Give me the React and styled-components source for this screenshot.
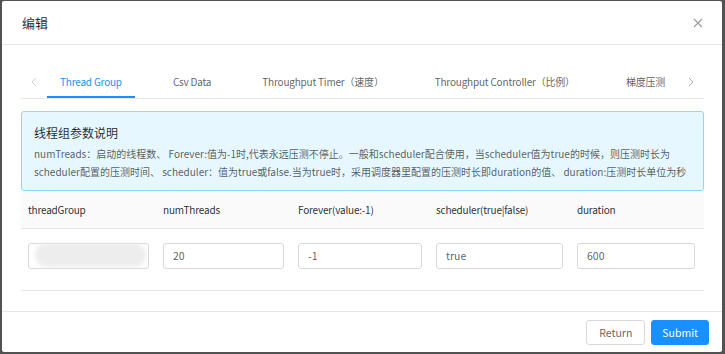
import React from "react";
import styled, { createGlobalStyle } from "styled-components";

const GlobalStyle = createGlobalStyle`
  html, body {
    margin: 0;
    padding: 0;
    background: #525252;
    overflow: hidden;
  }
  * {
    box-sizing: border-box;
  }
`;

const Mask = styled.div`
  width: 725px;
  height: 354px;
  padding: 1px 3px 2px 2px;
  display: flex;
  font-family: "Noto Sans CJK SC", "Open Sans", sans-serif;
  color: rgba(0, 0, 0, 0.65);
`;

const Modal = styled.div`
  flex: 1;
  min-width: 0;
  background: #fff;
  border-radius: 2px;
  display: flex;
  flex-direction: column;
`;

const Header = styled.div`
  height: 44px;
  border-bottom: 1px solid #e8e8e8;
  display: flex;
  align-items: center;
  justify-content: space-between;
  padding: 0 18px 0 20px;
`;

const Title = styled.div`
  font-size: 13px;
  color: rgba(0, 0, 0, 0.85);
`;

const Close = styled.button`
  border: none;
  background: none;
  padding: 0;
  width: 12px;
  height: 12px;
  display: flex;
  align-items: center;
  justify-content: center;
  cursor: pointer;
`;

const Body = styled.div`
  flex: 1;
  min-width: 0;
  padding: 20px 18px 0 19px;
`;

const TabBar = styled.div`
  height: 34px;
  display: flex;
  align-items: stretch;
  border-bottom: 1px solid #e8e8e8;
  margin-bottom: 12px;
`;

const Arrow = styled.div`
  width: 26px;
  display: flex;
  align-items: center;
  justify-content: center;
  flex: none;
`;

const TabList = styled.div`
  flex: 1;
  min-width: 0;
  display: flex;
  gap: 25px;
  overflow: hidden;
  white-space: nowrap;
`;

const Tab = styled.div`
  position: relative;
  padding: 0 13px;
  display: flex;
  align-items: center;
  font-size: 10px;
  letter-spacing: -0.2px;
  color: ${(p) => (p.$active ? "#1890ff" : "rgba(0,0,0,0.65)")};
  flex: none;
  &::after {
    content: "";
    position: absolute;
    left: 0;
    right: 0;
    bottom: 0;
    height: 2px;
    background: ${(p) => (p.$active ? "#1890ff" : "transparent")};
  }
`;

const Notice = styled.div`
  background: #e6f7ff;
  border: 1px solid #91d5ff;
  border-radius: 3px;
  padding: 11px 12px 9px;
`;

const NoticeTitle = styled.div`
  font-size: 12px;
  line-height: 20px;
  color: rgba(0, 0, 0, 0.85);
  margin-bottom: 2px;
`;

const NoticeText = styled.div`
  font-size: 10px;
  line-height: 18px;
  color: rgba(0, 0, 0, 0.65);
  white-space: nowrap;
`;

const Grid = styled.div`
  display: grid;
  grid-template-columns: 135px 135px 138px 141px 134px;
`;

const HeadCell = styled.div`
  background: #fafafa;
  border-bottom: 1px solid #e8e8e8;
  height: 38px;
  padding: 0 7px;
  display: flex;
  align-items: center;
  font-size: 10px;
  letter-spacing: -0.2px;
  color: rgba(0, 0, 0, 0.85);
  white-space: nowrap;
`;

const Cell = styled.div`
  border-bottom: 1px solid #e8e8e8;
  padding: 12px ${(p) => p.$right || 7}px 21px 7px;
`;

const InputWrap = styled.div`
  position: relative;
`;

const Input = styled.input`
  width: 100%;
  height: 26px;
  border: 1px solid #d9d9d9;
  border-radius: 3px;
  padding: 0 9px;
  font-family: inherit;
  font-size: 10.5px;
  color: rgba(0, 0, 0, 0.65);
  background: #fff;
  outline: none;
`;

const Blur = styled.div`
  position: absolute;
  left: 7px;
  right: 3px;
  top: 2px;
  height: 24px;
  border-radius: 12px;
  background: #ededed;
  filter: blur(2px);
  pointer-events: none;
`;

const Footer = styled.div`
  border-top: 1px solid #e8e8e8;
  height: 41px;
  padding: 0 13px;
  display: flex;
  align-items: center;
  justify-content: flex-end;
  gap: 6px;
`;

const Button = styled.button`
  height: 25px;
  padding: 0 ${(p) => (p.$primary ? 10 : 12)}px;
  border-radius: 3px;
  border: 1px solid ${(p) => (p.$primary ? "#1890ff" : "#d9d9d9")};
  background: ${(p) => (p.$primary ? "#1890ff" : "#fff")};
  color: ${(p) => (p.$primary ? "#fff" : "rgba(0,0,0,0.65)")};
  font-family: inherit;
  font-size: 10.5px;
  cursor: pointer;
`;

const Chevron = ({ dir, color }) => (
  <svg width="6" height="10" viewBox="0 0 6 10">
    <polyline
      points={dir === "left" ? "5,1 1,5 5,9" : "1,1 5,5 1,9"}
      fill="none"
      stroke={color}
      strokeWidth="1"
    />
  </svg>
);

const tabs = [
  "Thread Group",
  "Csv Data",
  "Throughput Timer（速度）",
  "Throughput Controller（比例）",
  "梯度压测",
];

const columns = [
  { name: "threadGroup", value: "", blur: true },
  { name: "numThreads", value: "20" },
  { name: "Forever(value:-1)", value: "-1" },
  { name: "scheduler(true|false)", value: "true" },
  { name: "duration", value: "600", right: 9 },
];

function App() {
  return (
    <>
      <GlobalStyle />
      <Mask>
        <Modal>
          <Header>
            <Title>编辑</Title>
            <Close>
              <svg width="10" height="10" viewBox="0 0 10 10">
                <path d="M1 1L9 9M9 1L1 9" stroke="#999" strokeWidth="1.1" />
              </svg>
            </Close>
          </Header>
          <Body>
            <TabBar>
              <Arrow>
                <Chevron dir="left" color="#d0d0d0" />
              </Arrow>
              <TabList>
                {tabs.map((t, i) => (
                  <Tab key={t} $active={i === 0}>
                    {t}
                  </Tab>
                ))}
              </TabList>
              <Arrow>
                <Chevron dir="right" color="#aaa" />
              </Arrow>
            </TabBar>
            <Notice>
              <NoticeTitle>线程组参数说明</NoticeTitle>
              <NoticeText>
                numTreads：启动的线程数、 Forever:值为-1时,代表永远压测不停止。一般和scheduler配合使用，当scheduler值为true的时候，则压测时长为
              </NoticeText>
              <NoticeText>
                scheduler配置的压测时间、 scheduler：值为true或false.当为true时，采用调度器里配置的压测时长即duration的值、 duration:压测时长单位为秒
              </NoticeText>
            </Notice>
            <Grid>
              {columns.map((c) => (
                <HeadCell key={c.name}>{c.name}</HeadCell>
              ))}
              {columns.map((c) => (
                <Cell key={c.name} $right={c.right}>
                  <InputWrap>
                    <Input defaultValue={c.value} />
                    {c.blur && <Blur />}
                  </InputWrap>
                </Cell>
              ))}
            </Grid>
          </Body>
          <Footer>
            <Button>Return</Button>
            <Button $primary>Submit</Button>
          </Footer>
        </Modal>
      </Mask>
    </>
  );
}

export default App;
